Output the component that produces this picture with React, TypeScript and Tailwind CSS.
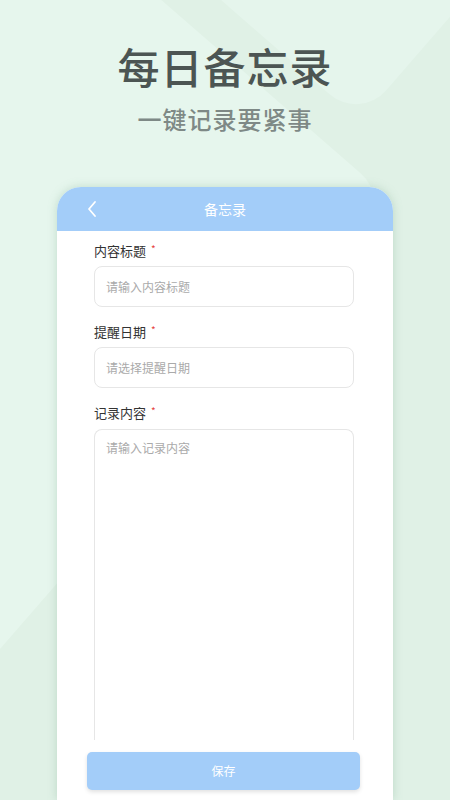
import React from 'react';

const FONT = { fontFamily: '"Noto Sans CJK SC", "Noto Sans", sans-serif' };

const FIELDS = [
  { label: '内容标题', placeholder: '请输入内容标题' },
  { label: '提醒日期', placeholder: '请选择提醒日期' },
];

function Label({ text }: { text: string }) {
  return (
    <div className="flex h-[20px] items-center text-[13px] text-[#333333]">
      <span>{text}</span>
      <span className="ml-[5px] -mt-[6px] text-[10px] text-[#e64340]">*</span>
    </div>
  );
}

export default function App() {
  return (
    <div className="relative h-[800px] w-[450px] overflow-hidden bg-[#e0f1e6]" style={FONT}>
      {/* Decorative background shapes */}
      <div className="pointer-events-none absolute left-[-453px] top-[-116px] h-[700px] w-[700px] rotate-[41deg] rounded-[40px] bg-[#e6f6ed]" />
      <div className="pointer-events-none absolute left-[195px] top-[-241px] h-[300px] w-[300px] rotate-[41deg] rounded-[40px] bg-[#e5f5ec]" />

      <div className="relative flex h-full flex-col items-center">
        {/* Heading */}
        <h1 className="mt-[38px] text-[42px] font-medium leading-[56px] tracking-[1px] text-[#4c5553]">每日备忘录</h1>
        <p className="mt-[9px] text-[24px] font-medium leading-[32px] tracking-[1px] text-[#7e8986]">一键记录要紧事</p>

        {/* Phone card */}
        <div className="mt-[52px] flex w-[336px] flex-1 flex-col overflow-hidden rounded-t-[24px] bg-white shadow-[0_0_10px_rgba(120,170,140,0.35)]">
          <div className="relative flex h-[44px] shrink-0 items-center justify-center bg-[#a3cdf9]">
            <svg className="absolute left-[29px] top-[13px]" width="12" height="18" viewBox="0 0 12 18" fill="none">
              <path d="M9 2L3 9l6 7" stroke="#ffffff" strokeWidth="1.8" strokeLinecap="round" strokeLinejoin="round" />
            </svg>
            <span className="text-[14px] text-white">备忘录</span>
          </div>

          <div className="flex flex-1 flex-col pl-[37px] pr-[39px] pt-[10px]">
            {FIELDS.map((f, i) => (
              <div key={i} className="mb-[15px] flex flex-col gap-[5px]">
                <Label text={f.label} />
                <div className="flex h-[41px] items-center rounded-[8px] border border-[#e6e6e6] px-[11px] text-[12px] text-[#aaaaaa]">
                  {f.placeholder}
                </div>
              </div>
            ))}
            <div className="flex flex-col gap-[6px]">
              <Label text="记录内容" />
              <div className="h-[311px] rounded-t-[8px] border border-b-0 border-[#e6e6e6] px-[11px] pt-[9px] text-[12px] text-[#aaaaaa]">
                请输入记录内容
              </div>
            </div>
          </div>
        </div>

        {/* Save button */}
        <div className="absolute bottom-[10px] left-[87px] flex h-[38px] w-[273px] items-center justify-center rounded-[5px] bg-[#a3cdf9] text-[12px] text-white shadow-[0_2px_4px_rgba(0,0,0,0.12)]">
          保存
        </div>
      </div>
    </div>
  );
}
